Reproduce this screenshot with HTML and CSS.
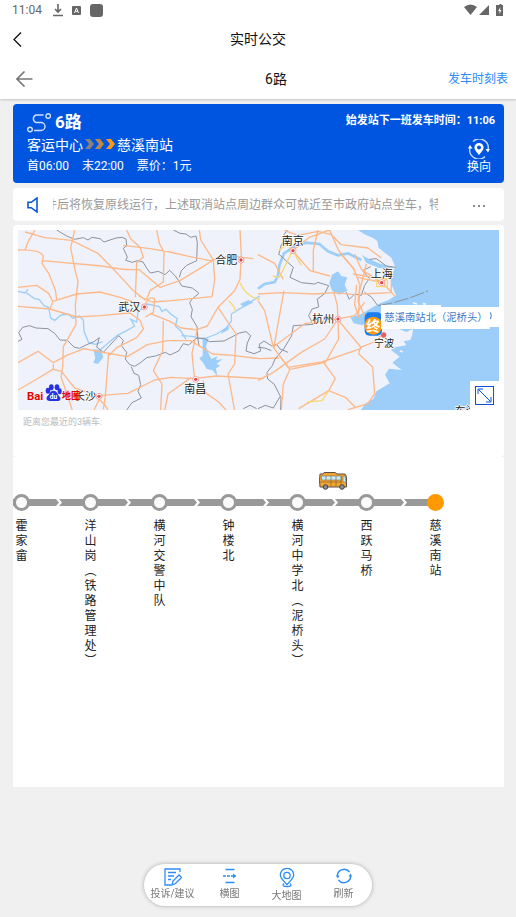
FILE: index.html
```html
<!DOCTYPE html>
<html lang="zh-CN">
<head>
  <meta charset="UTF-8">
  <meta name="viewport" content="width=device-width, initial-scale=1.0">
  <title>实时公交</title>
  <link rel="stylesheet" href="styles.css">
</head>
<body>
  <header class="top">
    <div class="status">
      <span class="clock">11:04</span>
      <svg width="10" height="14" viewBox="0 0 10 14"><path d="M5 1v8M2 6l3 3 3-3M0 12.500h10" fill="none" stroke="#666" stroke-width="1.600"/></svg>
      <svg class="status-a" width="9" height="9" viewBox="0 0 9 9"><rect width="9" height="9" rx="1" fill="#666"/><path d="M2.500 7l2-5 2 5M3.300 5.300h2.400" fill="none" stroke="#fff"/></svg>
      <svg width="13" height="13" viewBox="0 0 13 13"><rect width="13" height="13" rx="3" fill="#666"/></svg>
      <svg class="status-right" width="40" height="12" viewBox="0 0 40 12"><path d="M0 3q6.500-5 13 0L6.500 11zM15 11L25 1v10zM34 1h1.500V0h2v1H39v11h-7V1z" fill="#666"/><path d="M36.500 3L34 7h1.500v3L37.500 6H36z" fill="#fff"/></svg>
    </div>
    <div class="bar">
      <button class="back" aria-label="返回"><svg width="9" height="15" viewBox="0 0 9 15"><path d="M8 .5L1 7.500l7 7" fill="none" stroke="#111" stroke-width="1.300"/></svg></button>
      <h1>实时公交</h1>
    </div>
    <div class="bar">
      <button class="back back-page" aria-label="返回上一页"><svg width="17" height="16" viewBox="0 0 17 16"><path d="M8.500.5L1 8l7.500 7.500M1 8h15.500" fill="none" stroke="#777" stroke-width="1.600"/></svg></button>
      <h2>6路</h2>
      <a class="timetable" href="#timetable">发车时刻表</a>
    </div>
  </header>

  <main>
    <section class="route">
      <div class="route-info">
        <h3>
          <svg width="24" height="20" viewBox="0 0 24 20" fill="none" stroke="#cfe0ff" stroke-width="1.400"><circle cx="3" cy="16.500" r="2.300"/><circle cx="21.200" cy="3" r="2.300"/><path d="M16.500 2H9a4 4 0 0 0 0 7.500h5a4 4 0 0 1 0 8H7"/></svg>
          <span>6路</span>
        </h3>
        <p class="ends">客运中心<svg width="32" height="12" viewBox="0 0 32 12"><path d="M1 1h5l4 5-4 5H1l4-5z" fill="#8b8178"/><path d="M11 1h5l4 5-4 5h-5l4-5z" fill="#c08a3e"/><path d="M22 1h5l4 5-4 5h-5l4-5z" fill="#f79a14"/></svg>慈溪南站</p>
        <p class="hours"><span>首06:00</span><span>末22:00</span><span>票价：1元</span></p>
      </div>
      <div class="route-side">
        <p class="next">始发站下一班发车时间：11:06</p>
        <button class="swap">
          <svg width="22" height="20" viewBox="0 0 22 20"><path d="M5 2.500A9 9 0 0 1 20 11M17 17.500A9 9 0 0 1 2 9" fill="none" stroke="#cfe0ff" stroke-width="1.300"/><path d="M17.500 10h4.500l-2 3.500zM0 9.500h4.500L2 6z" fill="#fff"/><path d="M11 4a4.600 4.600 0 0 0-4.600 4.600C6.400 11.500 11 16 11 16s4.600-4.500 4.600-7.400A4.600 4.600 0 0 0 11 4zm0 2.600a2 2 0 1 1 0 4 2 2 0 0 1 0-4z" fill="#fff"/></svg>
          换向
        </button>
      </div>
    </section>

    <section class="notice">
      <svg width="11" height="16" viewBox="0 0 11 16"><path d="M1 5.300h3.200L10 1v14l-5.800-4.300H1z" fill="none" stroke="#0b55d8" stroke-width="1.600"/></svg>
      <p><span>件后将恢复原线运行，上述取消站点周边群众可就近至市政府站点坐车，特</span></p>
      <button aria-label="更多"><svg width="14" height="4" viewBox="0 0 14 4"><path d="M1 2h2v2H1zM6 2h2v2H6zM11 2h2v2h-2z" fill="#888"/></svg></button>
    </section>

    <section class="panel">
      <div class="map">
        <svg class="map-view" viewBox="0 0 1443 540" preserveAspectRatio="xMidYMid slice">
          <rect width="1443" height="540" fill="#eff2fa"/>

          <!-- west half -->
          <g transform="translate(-24 -18)">
            <g class="river">
              <path d="M24 202l22 5 8-12M50 207l22 16 16 4 14 18 14 5 6 32 12 7 20-16 22-3 12 13 20-7 12 12 2 34 14 34 20 5 22-8"/>
              <path d="M270 378l52-44 28-14 24-14-12-20 18 8 4-30 28-24 36 8 8 14 12-6 14 14 20 14-6 22 16 14 16 26" />
              <path d="M514 335l32 2 34 8 40-15 28-18 16-20v-22l22-14 26-14 18-14 20-12"/>
            </g>
            <g class="water">
              <path d="M250 376l22 2 8 22-16 20-14-4 6-14z"/>
              <path d="M578 340l18 5-8 22 8 22 8 16 18-8-4 12 20-4-18 14 10 6-12 8 4 24-14-18-18-4-10-18-12-14 10-8z"/>
              <path d="M640 316l20-10-6 12-22 12zM690 240l26-12 14 8-30 12z"/>
            </g>
            <g class="border">
              <path d="M140 18l30 18 24 10 26-5 14 7 12-8 24 4 12 10 36-12 18-2 12 5 2 20-10 8 12 26-5 10 20 6 16-5 16 4 12 20 10 13 24-5 20 10 14-13 16 16 10 13 10 18 32 6 20 16-20 16-8 12 8 20-4 22 18 30 3 40 4 20"/>
              <path d="M490 18l20 10 18 2 14 10 16-4 4 20-2 54-30 14-16 16-6 20"/>
              <path d="M24 352l12-6-10-20 12-16 20-5 20 7 36 2 20 14 16 20 22 1 20 20 16 4 20-10 24-10 16-12-8 28 20 16 46-50 14 14-6 16 16 20-4 20 12 16 16 6 16-10 20-16 30-6 26-10 14 8 26-12 14-22 16 4 22-20h24l16 10 44-2 46-24 20-4 14 12-10 22-4 24 24 8 20-8-4-20 14-10 22 14 16-4 10 14 24 10"/>
              <path d="M364 428l8 20 14 6 6 28-8 20 10 20-28 14-16 22M700 554l20-10 20 10"/>
            </g>
            <g class="road">
              <path d="M45 78l10-26 20-34M24 78q65-2 76 18l-4 22 20 30 20 50 4 28M96 110l180 16q70 14 110 10"/>
              <path d="M45 24l60 17 80 8 80 40 60 62 46 50 36 28M194 18l-12 54 14 70 8 30-8 70 2 60-38 66-2 60-5 30 24 70 16 50"/>
              <path d="M350 18l12 26 28 26 10 30-20 16-4 104M386 136l64 54 60-20 65-40 35-22"/>
              <path d="M440 18l8 40 14 26-2 90-40 26-10 26M340 64l80 10 60 10 60 14 60 12 60-14 70 8M568 18l4 30 38 60 4 60-8 50-120 12-60 4-40-18"/>
              <path d="M24 190l56-6 36 24 12 24 72-22 70-6 60 16 60 20M24 247l96 8 80 24 70-4 90-8 30 22 10 26-20 26-60 30-26 26M120 255l8-20"/>
              <path d="M24 416l60-34 46 34 40-22 52-20 50 10 80 14 60-36 60-12 70 0 66 40 60 4 80 10 60-2"/>
              <path d="M130 420v16l24 6 40 50 60 20 30 30 10 16M24 498l52-30 56-34M296 386l-10 130-6 40M252 558l22-44 80-6 80-40 50-8 66 4 70-8 140 8"/>
              <path d="M460 290l-2 90-28 60 26 40-4 78M562 316l-16 72 8 80M562 316l30-10 32-56 50-50 16-34 4-70-4-78M580 470l6 36 40 28 24 26M544 460l-70 50-10 50M624 250l54 80-4 90-20 30 20 110"/>
              <path d="M400 255q16-44 34-30l-4 40-24 14M420 268l60 24 34 20 50 6"/>
            </g>
            <path class="road yellow" d="M690 176q20 44 60 50M656 230q22 20 20 36"/>
          </g>

          <!-- east half -->
          <g transform="translate(720 -18)">
            <path class="water" d="M300 18l18 12 27 12 13 9 4 20 22 18 16 12 12 28-6 12-4 22-2 17 14 34-22 14-26 10-17 9-20 12-20 12-18 5-14 4 10 18 26 6 30-20 30 10 30 12 42 18 20-10-2 18-6 16-20 4 8 12-34 6-12 8 26 20-22 18 28 22-38-4-12 18 14 26-40 24-8 22-24 14L300 570H730V18z"/>
            <path class="water" d="M222 152l18-10 10 14 18 4-8 22 8 18-24 12-22-12-8-22zM412 132l-50-14-42-20-8-6 12 24 40 16z"/>
            <path d="M465 236l12 4M494 238l10 3M448 336l10-8M426 380l8 4" stroke="#eff2fa" stroke-width="5"/>
            <g class="river">
              <path d="M0 194l20-14 30-6 10-20 4-30 14-36 30-20 36-12 40 4 26 22 30 12 30-6 40 20" stroke-width="8"/>
            </g>
            <g class="border">
              <path d="M62 92l8-30 18-20-10-10 10-14M62 90l22 20 22 20-10 30 34 16 40 4 10-5 32 10-12 24-22 16 4 24-20 6-10 20 14 26-60 4-5 30-24 40-26 30-8 20-16 20 2 20 20 16 20 40-2 50 30-5 2 40M0 370l20 2 20 8M0 554l22-10 24 8 20-34"/>
              <path d="M264 204l10 22 16-16 20 4 10-30 14-20-20-24 24-12M320 205l20 14 18 24M335 106l20-2 30 22 28 4"/>
              <path d="M360 245l42-8 50-14 58-22" stroke-dasharray="44 6"/>
            </g>
            <g class="road">
              <path d="M80 20l40 14 60-12 40 10 30 30 80 10 40 30M0 92l50 26 26 48M104 80l52 60 60 16M180 18l-14 60v62"/>
              <path d="M104 80l50-40 60-22M0 210l70-4 100 4 60-4 60 6M215 18l26 60 50 62"/>
              <path d="M228 205l10 40 2 40-100 14-94 70M240 285l-40 60-70 40-84 60-46 24M240 285l2 60-40 70-110 22M240 285l50-10 30-40M238 285l70 84-6 20 42 40 6 80-20 30-60 18M308 370l40-16 24-22"/>
              <path d="M0 230l20 30 26 110 50 66-20 44-6 76M46 370l44 60 102-16 116-40M196 414l36 50-20 36 50 20 30 30M212 500l-60 36-30 18M48 370l10-60 20-110"/>
              <path d="M250 92l36 40 20 50-6 50 18 40 30 16M290 90l20 46 60 40 30-20M300 160l74 16 36 40"/>
              <path d="M310 210l90-4v-44M285 150l60 10M296 182l-6 60 10 30M325 120l-20 80-4 80"/>
            </g>
            <path class="road yellow" d="M104 80l-18-20-24 20M104 80l26 44M104 80l-40 80-20-4M212 500l-20 30-44 4M356 164h32v24h-32z"/>
          </g>

          <!-- cities -->
          <g class="cities">
            <text x="592" y="102">合肥</text><text x="301" y="242">武汉</text><text x="499" y="489">南昌</text><text x="168" y="511">长沙</text>
            <text x="791" y="46">南京</text><text x="1058" y="143">上海</text><text x="883" y="280">杭州</text><text x="1068" y="352" class="small">宁波</text><text x="1310" y="555">东海</text>
          </g>
          <g class="rings">
            <circle cx="669" cy="90" r="9"/><circle cx="379" cy="231" r="9"/><circle cx="533" cy="448" r="9"/><circle cx="243" cy="499" r="9"/><circle cx="825" cy="62" r="9"/><circle cx="1091" cy="158" r="9"/><circle cx="960" cy="267" r="9"/>
          </g>
          <g class="dots">
            <circle cx="669" cy="90" r="5"/><circle cx="379" cy="231" r="5"/><circle cx="533" cy="448" r="5"/><circle cx="243" cy="499" r="5"/><circle cx="825" cy="62" r="5"/><circle cx="1091" cy="158" r="5"/><circle cx="960" cy="267" r="5"/>
          </g>

          <!-- terminal marker -->
          <rect x="1040" y="247" width="52" height="70" rx="14" fill="#1a7cf0"/>
          <circle cx="1066" cy="287" r="27" fill="#ff9a0c"/>
          <text x="1066" y="302" class="terminal">终</text>
          <circle cx="1097" cy="315" r="8" fill="#e8605c"/>
          <path d="M1089 225h180v6h174v60h-28v6h-326z" fill="#fff"/>
          <text x="1099" y="274" class="stop-name">慈溪南站北（泥桥头）</text>
          <path d="M1417 247q6 10 0 20" fill="none" stroke="#3a7bc8" stroke-width="3"/>

          <!-- map logo -->
          <text x="27" y="509" class="baidu">Bai</text>
          <g fill="#2932e1"><ellipse cx="90" cy="482" rx="7" ry="9"/><ellipse cx="100" cy="472" rx="7" ry="9"/><ellipse cx="117" cy="472" rx="7" ry="9"/><ellipse cx="125" cy="484" rx="6" ry="9"/><path d="M107 482c10 0 12 12 18 18 6 8 0 14-8 13h-22c-9 0-12-7-7-14 7-6 8-17 19-17z"/></g>
          <text x="95" y="508" class="du">du</text>
          <text x="131" y="508" class="baidu-map">地图</text>
        </svg>
        <button class="expand" aria-label="放大地图"><svg width="19" height="19" viewBox="0 0 19 19" fill="none" stroke="#0b55d8"><rect x=".5" y=".5" width="18" height="18"/><path d="M3.500 3.500l12 12M3 8V3h5M16 11v5h-5"/></svg></button>
      </div>
      <p class="nearest">距离您最近的3辆车:</p>
    </section>

    <section class="line">
      <svg class="bus" width="30" height="20" viewBox="0 0 30 20"><path d="M6 1.500h11l2 1.500h8q1.500 1 1.500 5v8H2q-1-6 0-13h3z" fill="#f3a531" stroke="#5b5148"/><path d="M3.500 5h20v4h-20z" fill="#c8edf7" stroke="#6d7478" stroke-width=".6"/><path d="M25 5h2l1 6h-3z" fill="#c8edf7" stroke="#6d7478" stroke-width=".6"/><path d="M8 5v4M13 5v10M18 5v10M23 5v10M2 11h22" stroke="#8b6428" stroke-width=".7"/><g fill="#8a8f94" stroke="#444"><circle cx="7.500" cy="16" r="2.300"/><circle cx="24" cy="16" r="2.300"/></g></svg>
      <ol>
        <li><i></i>霍家畲</li>
        <li><i></i>洋山岗︵铁路管理处︶</li>
        <li><i></i>横河交警中队</li>
        <li><i></i>钟楼北</li>
        <li><i></i>横河中学北︵泥桥头︶</li>
        <li><i></i>西跃马桥</li>
        <li class="last"><i></i>慈溪南站</li>
      </ol>
    </section>
  </main>

  <nav class="toolbar">
    <button><svg width="18" height="18" viewBox="0 0 18 18" fill="none" stroke="#2b8df5" stroke-width="1.300"><path d="M16 4V1H1v16h6M4 4.500h8M4 8h6M4 11.500h3M8 17l1-4 6-6 2.500 2.500-6 6z"/></svg>投诉/建议</button>
    <button><svg width="18" height="18" viewBox="0 0 18 18" fill="none" stroke="#2b8df5" stroke-width="1.500"><path d="M4.500 1.500h9M4.500 14.500h9"/><path d="M2 8h11" stroke-dasharray="3 1"/><path d="M12 5.500L15.500 8 12 10.500z" fill="#2b8df5" stroke="none"/></svg>横图</button>
    <button><svg width="18" height="20" viewBox="0 0 18 20" fill="none" stroke="#2b8df5" stroke-width="1.300"><path d="M9 16.500C5 12.500 2.300 10 2.300 7a6.700 6.700 0 0 1 13.400 0c0 3-2.700 5.500-6.700 9.500z"/><circle cx="9" cy="7.500" r="3.200"/><path d="M6 15.500q-3 3 3 3t3-3"/></svg>大地图</button>
    <button><svg width="18" height="18" viewBox="0 0 18 18" fill="none" stroke="#2b8df5" stroke-width="1.400"><path d="M2.500 9A6.700 6.700 0 0 1 14.500 4M15.500 7A6.700 6.700 0 0 1 3.500 12"/><path d="M1 7.500h3.500L3 10.500zM13.500 8.500H17l-1.500-3z" fill="#2b8df5" stroke="none"/></svg>刷新</button>
  </nav>
</body>
</html>
```
FILE: styles.css
```css
* {
  box-sizing: border-box;
}
body {
  margin: 0;
  min-height: 100vh;
  background: #f0f0f0;
  color: #222;
  font-family: Roboto, "Noto Sans CJK SC", sans-serif;
  font-size: 12px;
}
h1, h2, h3, p, ol {
  margin: 0;
  padding: 0;
  font-weight: normal;
}
button {
  padding: 0;
  border: none;
  background: none;
  color: inherit;
  font: inherit;
  cursor: pointer;
}
svg {
  display: block;
}

/* header */
.top {
  background: #fff;
  box-shadow: 0 1px 2px rgba(0, 0, 0, .2);
}
.status {
  display: flex;
  align-items: center;
  gap: 9px;
  height: 20px;
  padding: 0 12px;
  color: #666;
}
.clock {
  margin-right: 2px;
}
.status-right {
  margin-left: auto;
}
.bar {
  position: relative;
  display: flex;
  align-items: center;
  justify-content: center;
  height: 39px;
}
.bar:last-child {
  height: 40px;
}
h1, h2 {
  padding-bottom: 3px;
  color: #111;
  font-size: 14px;
}
.bar:last-child h2 {
  padding-left: 36px;
}
.back {
  position: absolute;
  left: 13px;
}
.back-page {
  left: 16px;
}
.timetable {
  position: absolute;
  right: 8px;
  padding-bottom: 3px;
  color: #2b8df5;
  text-decoration: none;
}

main {
  display: flex;
  flex-direction: column;
  padding: 5px 12px 0 13px;
}

/* route card */
.route {
  display: flex;
  justify-content: space-between;
  height: 79px;
  padding: 6px 9px 8px 14px;
  border-radius: 4px;
  background: #0055e0;
  color: #fff;
}
.route-info {
  display: flex;
  flex-direction: column;
}
h3 {
  display: flex;
  align-items: center;
  gap: 4px;
  height: 23px;
  font-size: 17px;
  font-weight: bold;
}
h3 svg {
  margin-top: 3px;
}
h3 span {
  padding-bottom: 3px;
}
.ends {
  display: flex;
  align-items: center;
  gap: 1px;
  height: 22px;
  font-size: 14px;
}
.hours {
  display: flex;
  align-items: center;
  gap: 13px;
  height: 18px;
}
.route-side {
  display: flex;
  flex-direction: column;
  align-items: flex-end;
}
.next {
  height: 30px;
  font-size: 11px;
  font-weight: bold;
  line-height: 22px;
}
.swap {
  display: flex;
  flex-direction: column;
  align-items: center;
  margin-right: 4px;
  line-height: 16px;
}

/* scrolling notice */
.notice {
  display: flex;
  align-items: center;
  gap: 15px;
  height: 33px;
  margin: 5px 0 4px;
  padding: 0 18px 0 14px;
  border-radius: 4px;
  background: #fff;
  color: #999;
}
.notice p {
  flex: 1;
  overflow: hidden;
  margin-right: 19px;
  line-height: 30px;
  white-space: nowrap;
}
.notice span {
  margin-left: -8px;
}

/* map */
.panel {
  height: 232px;
  padding: 5px 5px 0;
  border-radius: 4px;
  background: #fff;
}
.map {
  position: relative;
}
.map-view {
  width: 100%;
  height: 180px;
}
.river, .border, .road {
  fill: none;
}
.river {
  stroke: #9ccef9;
  stroke-width: 4;
}
.water {
  fill: #9ccef9;
}
.border {
  stroke: #8e929c;
  stroke-width: 3;
}
.road {
  stroke: #fdb98a;
  stroke-width: 4;
  stroke-linejoin: round;
}
.yellow {
  stroke: #fbd675;
}
.cities {
  fill: #222;
  stroke: #fff;
  stroke-width: 4;
  paint-order: stroke;
  font-size: 33px;
}
.cities .small {
  font-size: 30px;
}
.rings {
  fill: #fff;
  stroke: #ee8078;
  stroke-width: 2;
}
.dots {
  fill: #e04848;
}
.terminal {
  fill: #fff;
  font-size: 42px;
  font-weight: bold;
  text-anchor: middle;
}
.stop-name {
  fill: #3a7bc8;
  font-size: 31px;
}
.baidu, .baidu-map {
  fill: #e10602;
  font-size: 34px;
  font-weight: bold;
}
.baidu-map {
  font-size: 28px;
}
.du {
  fill: #fff;
  font-size: 20px;
  font-weight: bold;
}
.expand {
  position: absolute;
  right: 0;
  bottom: 0;
  padding: 5px;
  background: #fff;
}
.nearest {
  padding-left: 5px;
  color: #bbb;
  font-size: 9px;
  line-height: 24px;
}

/* stops */
.line {
  position: relative;
  overflow: hidden;
  height: 330px;
  padding-top: 37px;
  background: #fff;
}
.bus {
  position: absolute;
  top: 14px;
  right: 156px;
}
ol {
  display: flex;
  justify-content: flex-end;
  padding-right: 34px;
  list-style: none;
}
li {
  position: relative;
  flex: none;
  width: 69px;
  padding: 0 28px;
  line-height: 15px;
  line-break: anywhere;
  text-align: center;
}
li::before {
  content: "";
  position: absolute;
  top: 5px;
  left: 0;
  width: 100%;
  height: 7px;
  background: #999;
}
li::after {
  content: "";
  position: absolute;
  top: 5px;
  left: 0;
  width: 6px;
  height: 7px;
  background: #fff;
  clip-path: polygon(0 0, 50% 0, 100% 50%, 50% 100%, 0 100%, 50% 50%);
}
li i {
  position: relative;
  z-index: 1;
  display: block;
  width: 17px;
  height: 17px;
  margin: 0 -2px 8px;
  border: 3px solid #999;
  border-radius: 50%;
  background: #fafafa;
}
.last::before {
  width: 50%;
}
.last i {
  border-color: #ff9900;
  background: #ff9900;
}

/* floating toolbar */
.toolbar {
  position: fixed;
  bottom: 11px;
  left: 50%;
  display: flex;
  height: 42px;
  border-radius: 21px;
  background: #fff;
  box-shadow: 0 0 4px rgba(0, 0, 0, .3);
  color: #777;
  font-size: 10px;
  transform: translateX(-50%);
}
.toolbar button {
  display: flex;
  flex-direction: column;
  align-items: center;
  width: 57px;
  padding-top: 4px;
  line-height: 15px;
}
```
